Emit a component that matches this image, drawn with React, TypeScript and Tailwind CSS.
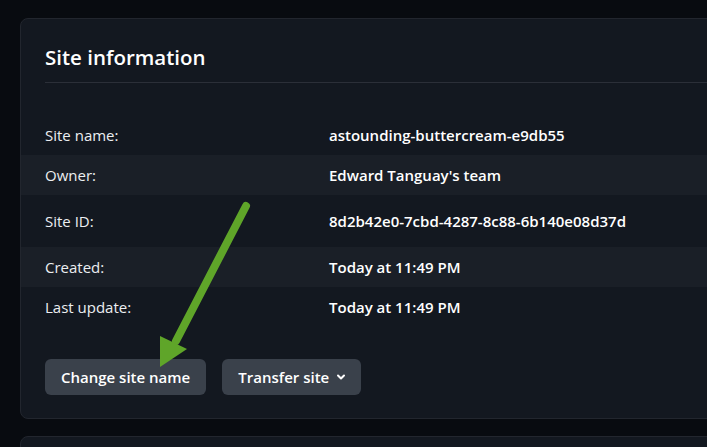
import React from "react";

const rows = [
  { label: "Site name:", value: "astounding-buttercream-e9db55", h: "h-[40px]", striped: false },
  { label: "Owner:", value: "Edward Tanguay's team", h: "h-[40px]", striped: true },
  { label: "Site ID:", value: "8d2b42e0-7cbd-4287-8c88-6b140e08d37d", h: "h-[52px]", striped: false },
  { label: "Created:", value: "Today at 11:49 PM", h: "h-[40px]", striped: true },
  { label: "Last update:", value: "Today at 11:49 PM", h: "h-[40px]", striped: false },
];

function Arrow() {
  return (
    <svg className="pointer-events-none absolute left-0 top-0" width="707" height="447" viewBox="0 0 707 447">
      <line x1="246" y1="206" x2="176" y2="341" stroke="#5fa529" strokeWidth="8" strokeLinecap="round" />
      <polygon points="160,336 187,349 160,367" fill="#5fa529" />
    </svg>
  );
}

export default function App() {
  return (
    <div
      className="relative h-[447px] w-[707px] overflow-hidden bg-[#080b10] text-white"
      style={{ fontFamily: '"Open Sans", "Noto Sans", sans-serif' }}
    >
      <div className="flex flex-col gap-[17px] pl-[20px] pt-[18px]">
        <section className="w-[760px] rounded-lg border border-[#22262e] bg-[#131820] pb-[23px]">
          <div className="px-[24px] pt-[24px]">
            <h2 className="border-b border-[#2b2f38] pb-[10px] text-[20.5px] font-semibold leading-[29px] text-white">
              Site information
            </h2>
          </div>

          <div className="mt-[32px]">
            {rows.map((r) => (
              <div
                key={r.label}
                className={[
                  "flex items-center px-[24px] text-[15px]",
                  r.h,
                  r.striped ? "bg-[#1a1f27]" : "",
                ].join(" ")}
              >
                <span className="w-[284px] text-[#eceef1]">{r.label}</span>
                <span className="font-semibold text-white">{r.value}</span>
              </div>
            ))}
          </div>

          <div className="mt-[32px] flex gap-[16px] px-[24px]">
            <button className="h-[36px] rounded-md bg-[#3a414b] px-[16px] text-[15px] font-semibold text-white">
              Change site name
            </button>
            <button className="flex h-[36px] items-center gap-[7px] rounded-md bg-[#3a414b] pl-[16px] pr-[15px] text-[15px] font-semibold text-white">
              Transfer site
              <svg width="10" height="10" viewBox="0 0 10 10">
                <path d="M2 3.5 L5 6.5 L8 3.5" fill="none" stroke="white" strokeWidth="2" strokeLinecap="round" strokeLinejoin="round" />
              </svg>
            </button>
          </div>
        </section>

        <section className="h-[60px] w-[760px] rounded-lg border border-[#22262e] bg-[#131820]" />
      </div>
      <Arrow />
    </div>
  );
}
